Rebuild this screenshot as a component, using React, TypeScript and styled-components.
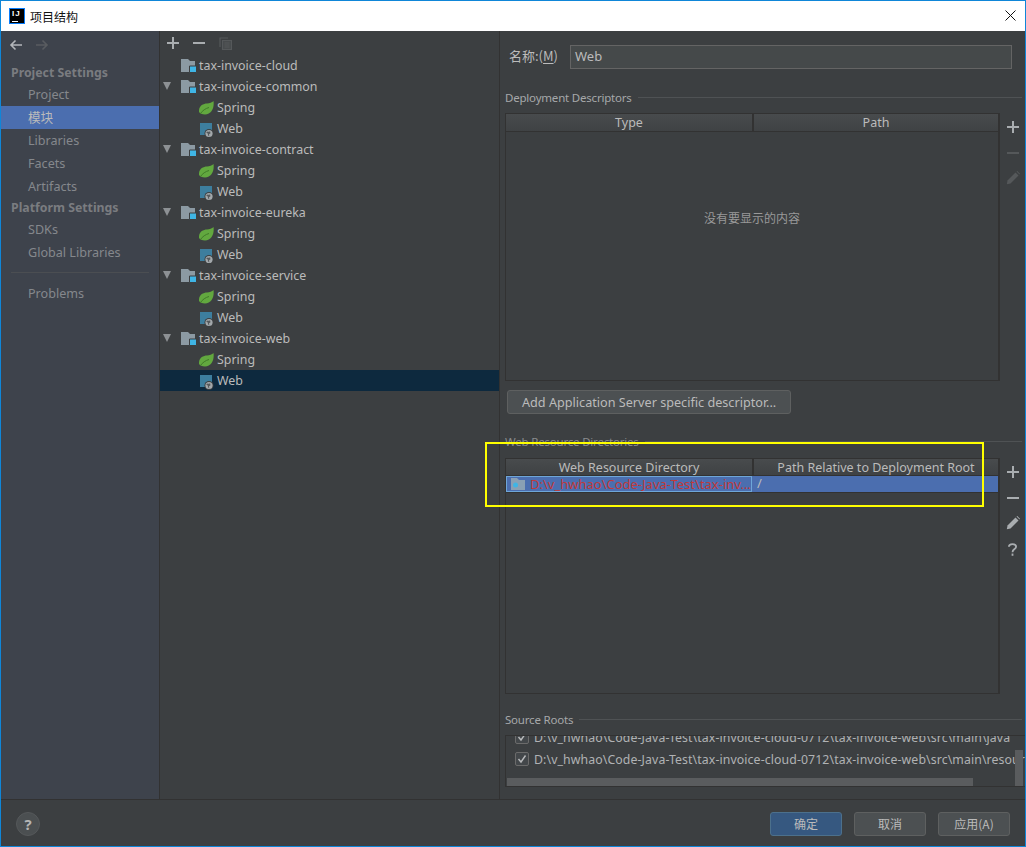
import React from 'react';
import styled, { createGlobalStyle } from 'styled-components';

const GlobalStyle = createGlobalStyle`
  html, body {
    margin: 0;
    padding: 0;
    background: #3c3f41;
  }
  body {
    font-family: "Noto Sans", "Noto Sans CJK SC", sans-serif;
    font-size: 13px;
    color: #bbbbbb;
  }
`;

const Window = styled.div`
  position: relative;
  display: flex;
  flex-direction: column;
  width: 1026px;
  height: 847px;
  box-sizing: border-box;
  border: 1px solid #0f86d8;
  background: #3c3f41;
  overflow: hidden;
`;

const TitleBar = styled.div`
  display: flex;
  align-items: center;
  flex: 0 0 30px;
  background: #ffffff;
  color: #111111;
  padding: 0 5px 0 8px;
  font-family: "Noto Sans CJK SC", sans-serif;
  font-size: 12px;
`;

const AppLogo = styled.div`
  position: relative;
  width: 16px;
  height: 16px;
  box-sizing: border-box;
  border: 1px solid #087cfa;
  background: #000000;
  color: #ffffff;
  font-family: "Liberation Sans", sans-serif;
  font-size: 8px;
  font-weight: 700;
  line-height: 10px;
  letter-spacing: 1px;
  padding-left: 2px;
  margin-right: 5px;
  margin-top: -1px;

  &::after {
    content: '';
    position: absolute;
    left: 2px;
    bottom: 1px;
    width: 6px;
    height: 1px;
    background: #ffffff;
  }
`;

const TitleText = styled.span`
  flex: 1;
`;

const CloseButton = styled.div`
  display: flex;
  width: 20px;
  justify-content: center;
  margin-bottom: 2px;
`;

const Body = styled.div`
  display: flex;
  flex: 1;
  min-height: 0;
`;

const Sidebar = styled.nav`
  display: flex;
  flex-direction: column;
  flex: 0 0 158px;
  background: #3e434c;
  border-right: 1px solid #323232;
`;

const NavArrows = styled.div`
  display: flex;
  align-items: center;
  gap: 12px;
  height: 28px;
  padding: 0 0 4px 8px;
`;

const NavHeading = styled.div`
  height: 20px;
  line-height: 20px;
  padding-left: 10px;
  color: #7a7c80;
  font-weight: 700;
  font-size: 12.3px;
`;

const NavItem = styled.div<{ $active?: boolean }>`
  height: 23px;
  line-height: 23px;
  padding-left: 27px;
  color: ${(p) => (p.$active ? '#bbbbbb' : '#85888c')};
  background: ${(p) => (p.$active ? '#4b6eaf' : 'transparent')};
  font-size: 12.6px;
`;

const NavDivider = styled.div`
  height: 1px;
  margin: 8px 10px 9px 10px;
  background: #4b4e52;
`;

const TreePane = styled.div`
  display: flex;
  flex-direction: column;
  flex: 0 0 339px;
  border-right: 1px solid #323232;
`;

const TreeToolbar = styled.div`
  display: flex;
  align-items: center;
  gap: 14px;
  height: 24px;
  padding-left: 7px;
`;

const TreeRow = styled.div<{ $depth: number; $selected?: boolean }>`
  display: flex;
  align-items: center;
  height: 21px;
  padding-left: ${(p) => (p.$depth === 0 ? 2 : 39)}px;
  background: ${(p) => (p.$selected ? '#0d293e' : 'transparent')};
  font-size: 12.4px;
`;

const Caret = styled.span<{ $hidden?: boolean }>`
  flex: 0 0 19px;
  height: 9px;
  visibility: ${(p) => (p.$hidden ? 'hidden' : 'visible')};

  &::before {
    content: '';
    display: block;
    width: 0;
    height: 0;
    margin-left: 1px;
    border-left: 4.5px solid transparent;
    border-right: 4.5px solid transparent;
    border-top: 8px solid #8d9194;
  }
`;

const RowLabel = styled.span`
  margin-left: 2px;
  white-space: nowrap;
`;

const Content = styled.div`
  display: flex;
  flex-direction: column;
  flex: 1;
  min-width: 0;
  padding-left: 5px;
`;

const NameRow = styled.div`
  display: flex;
  align-items: center;
  height: 24px;
  margin-top: 14px;
  padding: 0 13px 0 4px;
`;

const NameLabel = styled.label`
  flex: 0 0 61px;
  margin-bottom: 3px;
  font-size: 13px;
  font-family: "Noto Sans CJK SC", sans-serif;

  u {
    text-underline-offset: 2px;
  }
`;

const NameInput = styled.div`
  flex: 1;
  height: 24px;
  box-sizing: border-box;
  line-height: 20px;
  padding-left: 4px;
  background: #45494a;
  border: 1px solid #646464;
`;

const SectionTitle = styled.div<{ $top: number; $dim?: boolean }>`
  display: flex;
  align-items: center;
  gap: 6px;
  height: 16px;
  margin-top: ${(p) => p.$top}px;
  padding-right: 3px;
  font-size: 11.5px;
  letter-spacing: -0.2px;
  white-space: nowrap;
  color: ${(p) => (p.$dim ? '#8a8c8e' : '#a6a8aa')};

  &::after {
    content: '';
    flex: 1;
    height: 1px;
    background: #4f5254;
  }
`;

const TableRow = styled.div<{ $height: number; $top: number }>`
  display: flex;
  height: ${(p) => p.$height}px;
  margin-top: ${(p) => p.$top}px;
`;

const TableFrame = styled.div`
  display: flex;
  flex-direction: column;
  flex: 0 0 494px;
  box-sizing: border-box;
  border: 1px solid #323232;
`;

const TableHead = styled.div<{ $height: number }>`
  display: flex;
  flex: 0 0 ${(p) => p.$height}px;
  min-height: 0;
  overflow: hidden;
  border-bottom: 1px solid #323232;
  background: linear-gradient(#484b4d, #3f4244);
`;

const HeadCell = styled.div<{ $width: number }>`
  flex: 0 0 ${(p) => p.$width}px;
  box-sizing: border-box;
  text-align: center;
  font-size: 12.5px;
  line-height: 18px;
  white-space: nowrap;
  overflow: hidden;

  & + & {
    border-left: 2px solid #323232;
  }
`;

const TableBody = styled.div<{ $center?: boolean }>`
  display: flex;
  flex-direction: column;
  flex: 1;
  justify-content: ${(p) => (p.$center ? 'center' : 'flex-start')};
  padding-bottom: ${(p) => (p.$center ? 78 : 0)}px;
`;

const EmptyText = styled.div`
  text-align: center;
  font-family: "Noto Sans CJK SC", sans-serif;
  font-size: 12px;
  color: #999999;
`;

const SelectedRow = styled.div`
  display: flex;
  flex: 0 0 16px;
  min-height: 0;
  border-bottom: 1px solid #323232;
  background: #4b6eaf;
  line-height: 15px;
  font-size: 13px;
`;

const DirCell = styled.div`
  display: flex;
  align-items: center;
  gap: 4px;
  flex: 0 0 246px;
  box-sizing: border-box;
  padding-left: 4px;
  border: 1px solid #6ea6d8;
  color: #c03a3a;
  white-space: nowrap;
  overflow: hidden;
`;

const PathCell = styled.div`
  padding-left: 5px;
`;

const SideTools = styled.div`
  display: flex;
  flex-direction: column;
  align-items: center;
  gap: 14px;
  flex: 1;
  box-sizing: border-box;
  padding-top: 8px;
  border-left: 1px solid #323232;

  svg:nth-child(3) {
    margin-top: -2px;
  }
  svg:nth-child(4) {
    margin-top: -1px;
  }
`;

const AddButtonRow = styled.div`
  display: flex;
  margin-top: 9px;
  padding-left: 2px;
`;

const PlainButton = styled.button`
  height: 24px;
  padding: 0 14px;
  border: 1px solid #5e6060;
  border-radius: 3px;
  background: #4c5052;
  color: #bbbbbb;
  font: inherit;
  font-size: 12.65px;
`;

const SourceList = styled.div`
  position: relative;
  height: 50px;
  margin-top: 8px;
  border: 1px solid #323232;
  border-right: 0;
  overflow: hidden;
`;

const SourceRows = styled.div`
  margin-top: -10px;
  white-space: nowrap;
`;

const SourceRow = styled.div`
  display: flex;
  align-items: center;
  gap: 5px;
  height: 22px;
  padding-left: 9px;
  font-size: 12.3px;
  letter-spacing: 0.1px;
  color: #b0b2b4;
`;

const Checkbox = styled.span`
  display: flex;
  align-items: center;
  justify-content: center;
  flex: 0 0 12px;
  height: 12px;
  border: 1px solid #6b6b6b;
  border-radius: 2px;
  background: #43474a;
`;

const HScrollbar = styled.div`
  position: absolute;
  left: 1px;
  bottom: 0;
  width: 466px;
  height: 8px;
  background: #5a5c5e;
`;

const VScrollbar = styled.div`
  position: absolute;
  right: 2px;
  bottom: 0;
  width: 8px;
  height: 36px;
  background: #5a5c5e;
`;

const Footer = styled.div`
  display: flex;
  align-items: center;
  justify-content: space-between;
  flex: 0 0 47px;
  box-sizing: border-box;
  padding: 1px 15px 0 15px;
  border-top: 1px solid #323232;
`;

const HelpButton = styled.div`
  display: flex;
  align-items: center;
  justify-content: center;
  width: 24px;
  height: 24px;
  box-sizing: border-box;
  border-radius: 50%;
  border: 1px solid #55585a;
  background: #4b4f51;
  color: #b5b5b5;
  font-weight: 700;
  font-size: 15px;
`;

const FooterActions = styled.div`
  display: flex;
  gap: 12px;
`;

const FooterButton = styled.button<{ $primary?: boolean }>`
  width: 72px;
  height: 24px;
  padding: 0;
  border-radius: 3px;
  border: 1px solid ${(p) => (p.$primary ? '#4c708c' : '#5e6060')};
  background: ${(p) => (p.$primary ? '#365880' : '#4c5052')};
  color: #bbbbbb;
  font-family: "Noto Sans CJK SC", sans-serif;
  font-size: 12px;
`;

const Highlight = styled.div`
  position: absolute;
  left: 484px;
  top: 441px;
  width: 495px;
  height: 61px;
  border: 2px solid #ffff00;
  pointer-events: none;
`;

const ArrowIcon: React.FC<{ dir: 'left' | 'right'; color: string }> = ({ dir, color }) => (
  <svg width="14" height="14" viewBox="0 0 14 14" fill="none" stroke={color} strokeWidth="1.6">
    {dir === 'left' ? <path d="M13 7H2M6.5 2.5 2 7l4.5 4.5" /> : <path d="M1 7h11M7.500 2.500 12 7l-4.500 4.500" />}
  </svg>
);

const PlusIcon = () => (
  <svg width="12" height="12" viewBox="0 0 12 12" fill="#a9adb0">
    <path d="M5 0h2v5h5v2H7v5H5V7H0V5h5z" />
  </svg>
);

const MinusIcon: React.FC<{ color?: string }> = ({ color = '#a9adb0' }) => (
  <svg width="12" height="12" viewBox="0 0 12 12" fill={color}>
    <path d="M0 5h12v2H0z" />
  </svg>
);

const CopyIcon = () => (
  <svg width="13" height="13" viewBox="0 0 13 13" fill="none" stroke="#55585a" strokeWidth="1.200">
    <path d="M1 10V1h8" />
    <path d="M3.500 3.500h9v9h-9z" fill="#484b4d" />
    <path d="M5.500 6h5M5.500 8h5M5.500 10h5" />
  </svg>
);

const PencilIcon: React.FC<{ color: string }> = ({ color }) => (
  <svg width="14" height="14" viewBox="0 0 14 14" fill={color}>
    <path d="M9.500 1.500 12.500 4.500 4.500 12.500 0.800 13.200 1.500 9.500z" />
    <path d="M10.500 0.500 11.300 0 14 2.700 13.500 3.500z" />
  </svg>
);

const QuestionIcon = () => (
  <svg width="9" height="13" viewBox="0 0 10 14" fill="none" stroke="#a9adb0" strokeWidth="2">
    <path d="M1 4c0-4 8-4 8 0 0 2.500-4 2.500-4 6" />
    <path d="M5 11.500V14" />
  </svg>
);

const ModuleIcon = () => (
  <svg width="16" height="15" viewBox="0 0 16 15">
    <path d="M0 1h7l2 2h5v11H0z" fill="#8c9aa3" />
    <path d="M8.500 8H15.500V14.500H8.500z" fill="#3fb5e5" stroke="#3c3f41" strokeWidth="1" />
  </svg>
);

const SpringIcon = () => (
  <svg width="16" height="14" viewBox="0 0 16 14">
    <path d="M14.500 0C15.500 7 12.500 13.500 6 13.500 3 13.500 1 12.500 0 11 -0.500 5 4 2.500 8 2.500 10.500 2.500 13 1.500 14.500 0z" fill="#62a83f" />
    <path d="M1.500 12.500C3.500 9.500 6.500 7.500 10 6.500" fill="none" stroke="#3f7a28" strokeWidth="1" />
  </svg>
);

const WebIcon = () => (
  <svg width="16" height="18" viewBox="0 0 16 18">
    <path d="M1 3h12v12H1z" fill="#3d7e9e" />
    <circle cx="10" cy="13.500" r="4.500" fill="#3c3f41" />
    <circle cx="10" cy="13.500" r="3.600" fill="#a3a8ab" />
    <path d="M8 11.500c1.200.5 2 .5 3-.3l.5 2-1.500 1 .3 2.300-1.300-1.300-.2-1.700-1.500-.8z" fill="#55595c" />
  </svg>
);

const SourceFolderIcon = () => (
  <svg width="15" height="12" viewBox="0 0 15 12">
    <path d="M0 0h6l2 2h6v10H0z" fill="#8aa0b4" />
    <circle cx="4.500" cy="7" r="2.500" fill="#3fb5e5" />
  </svg>
);

const CheckMark = () => (
  <svg width="10" height="10" viewBox="0 0 10 10" fill="none" stroke="#b8babc" strokeWidth="1.400">
    <path d="M1.500 5 4 8 8.500 1.500" />
  </svg>
);

const modules = [
  { name: 'tax-invoice-cloud', leaf: true },
  { name: 'tax-invoice-common' },
  { name: 'tax-invoice-contract' },
  { name: 'tax-invoice-eureka' },
  { name: 'tax-invoice-service' },
  { name: 'tax-invoice-web', selected: true },
];

const App: React.FC = () => {
  return (
    <Window>
      <GlobalStyle />
      <TitleBar>
        <AppLogo>IJ</AppLogo>
        <TitleText>项目结构</TitleText>
        <CloseButton>
          <svg width="11" height="11" viewBox="0 0 11 11" stroke="#111111" strokeWidth="1">
            <path d="M0.500 0.500l10 10M10.500 0.500l-10 10" />
          </svg>
        </CloseButton>
      </TitleBar>
      <Body>
        <Sidebar>
          <NavArrows>
            <ArrowIcon dir="left" color="#b4b7ba" />
            <ArrowIcon dir="right" color="#595c60" />
          </NavArrows>
          <NavHeading>Project Settings</NavHeading>
          <NavItem>Project</NavItem>
          <NavItem $active>模块</NavItem>
          <NavItem>Libraries</NavItem>
          <NavItem>Facets</NavItem>
          <NavItem>Artifacts</NavItem>
          <NavHeading>Platform Settings</NavHeading>
          <NavItem>SDKs</NavItem>
          <NavItem>Global Libraries</NavItem>
          <NavDivider />
          <NavItem>Problems</NavItem>
        </Sidebar>
        <TreePane>
          <TreeToolbar>
            <PlusIcon />
            <MinusIcon />
            <CopyIcon />
          </TreeToolbar>
          {modules.map((m) => (
            <React.Fragment key={m.name}>
              <TreeRow $depth={0}>
                <Caret $hidden={m.leaf} />
                <ModuleIcon />
                <RowLabel>{m.name}</RowLabel>
              </TreeRow>
              {!m.leaf && (
                <>
                  <TreeRow $depth={1}>
                    <SpringIcon />
                    <RowLabel>Spring</RowLabel>
                  </TreeRow>
                  <TreeRow $depth={1} $selected={m.selected}>
                    <WebIcon />
                    <RowLabel>Web</RowLabel>
                  </TreeRow>
                </>
              )}
            </React.Fragment>
          ))}
        </TreePane>
        <Content>
          <NameRow>
            <NameLabel>
              名称:(<u>M</u>)
            </NameLabel>
            <NameInput>Web</NameInput>
          </NameRow>
          <SectionTitle $top={20}>Deployment Descriptors</SectionTitle>
          <TableRow $height={268} $top={8}>
            <TableFrame>
              <TableHead $height={17}>
                <HeadCell $width={246}>Type</HeadCell>
                <HeadCell $width={246}>Path</HeadCell>
              </TableHead>
              <TableBody $center>
                <EmptyText>没有要显示的内容</EmptyText>
              </TableBody>
            </TableFrame>
            <SideTools>
              <PlusIcon />
              <MinusIcon color="#55585a" />
              <PencilIcon color="#55585a" />
            </SideTools>
          </TableRow>
          <AddButtonRow>
            <PlainButton>Add Application Server specific descriptor...</PlainButton>
          </AddButtonRow>
          <SectionTitle $top={19} $dim>
            Web Resource Directories
          </SectionTitle>
          <TableRow $height={236} $top={9}>
            <TableFrame>
              <TableHead $height={16}>
                <HeadCell $width={246}>Web Resource Directory</HeadCell>
                <HeadCell $width={246}>Path Relative to Deployment Root</HeadCell>
              </TableHead>
              <TableBody>
                <SelectedRow>
                  <DirCell>
                    <SourceFolderIcon />
                    D:\v_hwhao\Code-Java-Test\tax-inv...
                  </DirCell>
                  <PathCell>/</PathCell>
                </SelectedRow>
              </TableBody>
            </TableFrame>
            <SideTools>
              <PlusIcon />
              <MinusIcon />
              <PencilIcon color="#a9adb0" />
              <QuestionIcon />
            </SideTools>
          </TableRow>
          <SectionTitle $top={17}>Source Roots</SectionTitle>
          <SourceList>
            <SourceRows>
              <SourceRow>
                <Checkbox>
                  <CheckMark />
                </Checkbox>
                D:\v_hwhao\Code-Java-Test\tax-invoice-cloud-0712\tax-invoice-web\src\main\java
              </SourceRow>
              <SourceRow>
                <Checkbox>
                  <CheckMark />
                </Checkbox>
                D:\v_hwhao\Code-Java-Test\tax-invoice-cloud-0712\tax-invoice-web\src\main\resources
              </SourceRow>
            </SourceRows>
            <HScrollbar />
            <VScrollbar />
          </SourceList>
        </Content>
      </Body>
      <Footer>
        <HelpButton>?</HelpButton>
        <FooterActions>
          <FooterButton $primary>确定</FooterButton>
          <FooterButton>取消</FooterButton>
          <FooterButton>应用(A)</FooterButton>
        </FooterActions>
      </Footer>
      <Highlight />
    </Window>
  );
};

export default App;
